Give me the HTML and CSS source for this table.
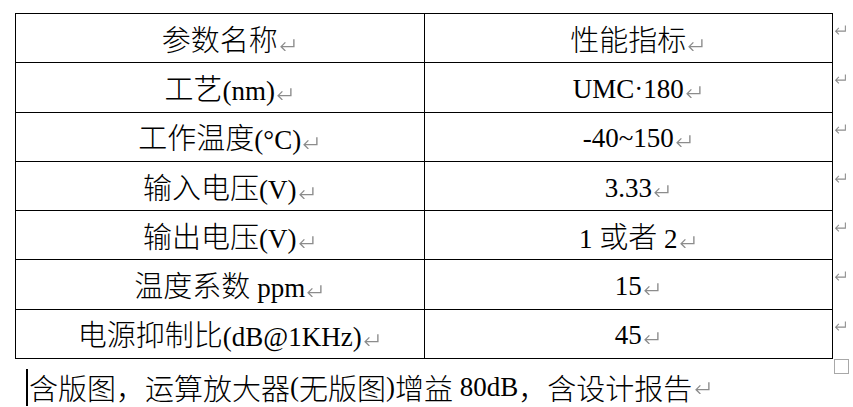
FILE: index.html
```html
<!DOCTYPE html>
<html lang="zh-CN">
<head>
    <meta charset="UTF-8">
    <meta name="viewport" content="width=device-width, initial-scale=1.0">
    <title>参数表</title>
    <link rel="stylesheet" href="styles.css">
</head>
<body>

<div class="page">
    <div class="sheet">
        <table class="params">
            <tr>
                <td><span class="zh">参数名称</span><svg class="mark" viewBox="0 0 16 12"><path d="M14 1V8H2M6 4L2 8L6 12"/></svg></td>
                <td><span class="zh">性能指标</span><svg class="mark" viewBox="0 0 16 12"><path d="M14 1V8H2M6 4L2 8L6 12"/></svg></td>
            </tr>
            <tr>
                <td><span class="zh">工艺</span>(nm)<svg class="mark" viewBox="0 0 16 12"><path d="M14 1V8H2M6 4L2 8L6 12"/></svg></td>
                <td>UMC·180<svg class="mark" viewBox="0 0 16 12"><path d="M14 1V8H2M6 4L2 8L6 12"/></svg></td>
            </tr>
            <tr>
                <td><span class="zh">工作温度</span>(°C)<svg class="mark" viewBox="0 0 16 12"><path d="M14 1V8H2M6 4L2 8L6 12"/></svg></td>
                <td>-40~150<svg class="mark" viewBox="0 0 16 12"><path d="M14 1V8H2M6 4L2 8L6 12"/></svg></td>
            </tr>
            <tr>
                <td><span class="zh">输入电压</span>(V)<svg class="mark" viewBox="0 0 16 12"><path d="M14 1V8H2M6 4L2 8L6 12"/></svg></td>
                <td>3.33<svg class="mark" viewBox="0 0 16 12"><path d="M14 1V8H2M6 4L2 8L6 12"/></svg></td>
            </tr>
            <tr>
                <td><span class="zh">输出电压</span>(V)<svg class="mark" viewBox="0 0 16 12"><path d="M14 1V8H2M6 4L2 8L6 12"/></svg></td>
                <td>1 <span class="zh">或者</span> 2<svg class="mark" viewBox="0 0 16 12"><path d="M14 1V8H2M6 4L2 8L6 12"/></svg></td>
            </tr>
            <tr>
                <td><span class="zh">温度系数</span> ppm<svg class="mark" viewBox="0 0 16 12"><path d="M14 1V8H2M6 4L2 8L6 12"/></svg></td>
                <td>15<svg class="mark" viewBox="0 0 16 12"><path d="M14 1V8H2M6 4L2 8L6 12"/></svg></td>
            </tr>
            <tr>
                <td><span class="zh">电源抑制比</span>(dB@1KHz)<svg class="mark" viewBox="0 0 16 12"><path d="M14 1V8H2M6 4L2 8L6 12"/></svg></td>
                <td>45<svg class="mark" viewBox="0 0 16 12"><path d="M14 1V8H2M6 4L2 8L6 12"/></svg></td>
            </tr>
        </table>

        <!-- 行尾标记 -->
        <div class="row-ends">
            <div class="row-end"><svg class="end-mark" viewBox="0 0 16 12"><path d="M14 1V8H2M6 4L2 8L6 12"/></svg></div>
            <div class="row-end"><svg class="end-mark" viewBox="0 0 16 12"><path d="M14 1V8H2M6 4L2 8L6 12"/></svg></div>
            <div class="row-end"><svg class="end-mark" viewBox="0 0 16 12"><path d="M14 1V8H2M6 4L2 8L6 12"/></svg></div>
            <div class="row-end"><svg class="end-mark" viewBox="0 0 16 12"><path d="M14 1V8H2M6 4L2 8L6 12"/></svg></div>
            <div class="row-end"><svg class="end-mark" viewBox="0 0 16 12"><path d="M14 1V8H2M6 4L2 8L6 12"/></svg></div>
            <div class="row-end"><svg class="end-mark" viewBox="0 0 16 12"><path d="M14 1V8H2M6 4L2 8L6 12"/></svg></div>
            <div class="row-end"><svg class="end-mark" viewBox="0 0 16 12"><path d="M14 1V8H2M6 4L2 8L6 12"/></svg></div>
            <div class="table-end"></div>
        </div>
    </div>

    <p class="note"><span class="caret"></span><span class="zh">含版图，运算放大器</span>(<span class="zh">无版图</span>)<span class="zh">增益</span> 80dB<span class="zh">，含设计报告</span><svg class="mark" viewBox="0 0 16 12"><path d="M14 1V8H2M6 4L2 8L6 12"/></svg></p>
</div>

</body>
</html>
```

FILE: styles.css
```css
body {
    margin: 0;
    background-color: #ffffff;
    font-family: "Liberation Serif", "Noto Sans CJK SC", serif;
    color: #000;
}
.page {
    padding: 13px 0 0 15px;
}
.sheet {
    display: flex;
    align-items: flex-start;
}
.params {
    border-collapse: collapse;
    width: 818px;
    table-layout: fixed;
}
.params td {
    border: 1px solid #000;
    height: 45.3px;
    padding: 3px 0 0 0;
    text-align: center;
    vertical-align: middle;
    font-size: 27px;
    line-height: 30px;
    white-space: nowrap;
}
.zh {
    font-family: "Noto Sans CJK SC", sans-serif;
    font-size: 29px;
    font-weight: 300;
}
.mark {
    display: inline-block;
    width: 17px;
    height: 13px;
    margin-left: 1px;
    margin-right: -18px;
    vertical-align: 0;
    fill: none;
    stroke: #8c8c8c;
    stroke-width: 1.3;
}
.row-ends {
    display: flex;
    flex-direction: column;
    padding-left: 1px;
}
.row-end {
    height: 49.3px;
    box-sizing: border-box;
    padding-top: 11px;
}
.end-mark {
    display: block;
    width: 13px;
    height: 11px;
    fill: none;
    stroke: #8c8c8c;
    stroke-width: 1.3;
}
.table-end {
    width: 13px;
    height: 13px;
    margin-top: 1px;
    border: 1px solid #a8a8a8;
}
.note {
    display: flex;
    align-items: center;
    margin: -5px 0 0 11px;
    font-size: 27px;
    line-height: 37px;
    white-space: pre;
}
.caret {
    display: inline-block;
    width: 2px;
    height: 37px;
    margin-right: 1px;
    background-color: #000;
}
.note .mark {
    margin-left: 2px;
    margin-right: 0;
}
```
